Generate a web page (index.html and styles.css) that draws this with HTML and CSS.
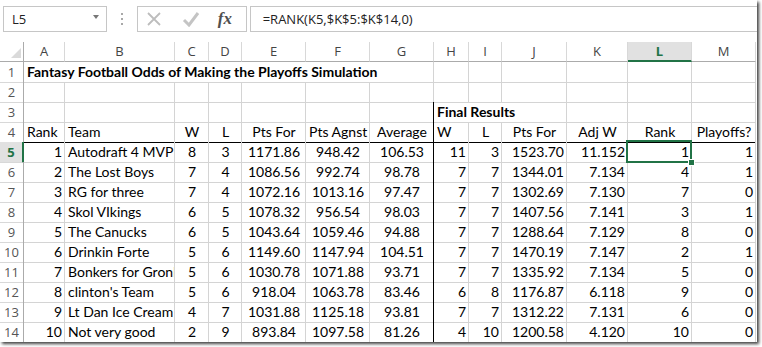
FILE: index.html
```html
<!DOCTYPE html>
<html>
<head>
<meta charset="utf-8">
<link rel="stylesheet" href="styles.css">
</head>
<body>
<div class="app">
  <div class="fbar">
    <div class="namebox"><span class="nb-text">L5</span><span class="dd"></span></div>
    <div class="dots"><i></i><i></i><i></i></div>
    <div class="btns">
      <svg class="ico" width="16" height="16" viewBox="0 0 16 16"><path d="M2 2 L14 14 M14 2 L2 14" stroke="#bdbdbd" stroke-width="1.8" fill="none"/></svg>
      <svg class="ico" width="18" height="16" viewBox="0 0 18 16"><path d="M2 9 L7 14 L16 2" stroke="#c4c4c4" stroke-width="3" fill="none"/></svg>
      <span class="fx">fx</span>
    </div>
    <div class="formula">=RANK(K5,$K$5:$K$14,0)</div>
  </div>
  <div class="sheet">
    <div class="row hdr">
      <div class="corner"><span class="tri"></span></div>
      <div class="ch">A</div><div class="ch">B</div><div class="ch">C</div><div class="ch">D</div><div class="ch">E</div><div class="ch">F</div><div class="ch">G</div><div class="ch">H</div><div class="ch">I</div><div class="ch">J</div><div class="ch">K</div><div class="ch on">L</div><div class="ch">M</div>
    </div>
    <div class="row">
      <div class="rh">1</div>
      <div class="c b span7">Fantasy Football Odds of Making the Playoffs Simulation</div>
      <div class="c"></div><div class="c"></div><div class="c"></div><div class="c"></div><div class="c"></div><div class="c"></div>
    </div>
    <div class="row">
      <div class="rh">2</div>
      <div class="c"></div><div class="c"></div><div class="c"></div><div class="c"></div><div class="c"></div><div class="c"></div><div class="c"></div><div class="c"></div><div class="c"></div><div class="c"></div><div class="c"></div><div class="c"></div><div class="c"></div>
    </div>
    <div class="row">
      <div class="rh">3</div>
      <div class="c"></div><div class="c"></div><div class="c"></div><div class="c"></div><div class="c"></div><div class="c"></div><div class="c vb"></div>
      <div class="c b span3">Final Results</div>
      <div class="c"></div><div class="c"></div><div class="c"></div>
    </div>
    <div class="row r4">
      <div class="rh">4</div>
      <div class="c">Rank</div><div class="c">Team</div><div class="c m">W</div><div class="c m">L</div><div class="c m">Pts For</div><div class="c m">Pts Agnst</div><div class="c m vb">Average</div><div class="c">W</div><div class="c m">L</div><div class="c m">Pts For</div><div class="c m">Adj W</div><div class="c m">Rank</div><div class="c m">Playoffs?</div>
    </div>
    <div class="row">
      <div class="rh on">5</div>
      <div class="c r">1</div><div class="c">Autodraft 4 MVP</div><div class="c m">8</div><div class="c m">3</div><div class="c m">1171.86</div><div class="c m">948.42</div><div class="c m vb">106.53</div><div class="c r">11</div><div class="c r">3</div><div class="c r">1523.70</div><div class="c r">11.152</div><div class="c r sel">1</div><div class="c r">1</div>
    </div>
    <div class="row">
      <div class="rh">6</div>
      <div class="c r">2</div><div class="c">The Lost Boys</div><div class="c m">7</div><div class="c m">4</div><div class="c m">1086.56</div><div class="c m">992.74</div><div class="c m vb">98.78</div><div class="c r">7</div><div class="c r">7</div><div class="c r">1344.01</div><div class="c r">7.134</div><div class="c r">4</div><div class="c r">1</div>
    </div>
    <div class="row">
      <div class="rh">7</div>
      <div class="c r">3</div><div class="c">RG for three</div><div class="c m">7</div><div class="c m">4</div><div class="c m">1072.16</div><div class="c m">1013.16</div><div class="c m vb">97.47</div><div class="c r">7</div><div class="c r">7</div><div class="c r">1302.69</div><div class="c r">7.130</div><div class="c r">7</div><div class="c r">0</div>
    </div>
    <div class="row">
      <div class="rh">8</div>
      <div class="c r">4</div><div class="c">Skol VIkings</div><div class="c m">6</div><div class="c m">5</div><div class="c m">1078.32</div><div class="c m">956.54</div><div class="c m vb">98.03</div><div class="c r">7</div><div class="c r">7</div><div class="c r">1407.56</div><div class="c r">7.141</div><div class="c r">3</div><div class="c r">1</div>
    </div>
    <div class="row">
      <div class="rh">9</div>
      <div class="c r">5</div><div class="c">The Canucks</div><div class="c m">6</div><div class="c m">5</div><div class="c m">1043.64</div><div class="c m">1059.46</div><div class="c m vb">94.88</div><div class="c r">7</div><div class="c r">7</div><div class="c r">1288.64</div><div class="c r">7.129</div><div class="c r">8</div><div class="c r">0</div>
    </div>
    <div class="row">
      <div class="rh">10</div>
      <div class="c r">6</div><div class="c">Drinkin Forte</div><div class="c m">5</div><div class="c m">6</div><div class="c m">1149.60</div><div class="c m">1147.94</div><div class="c m vb">104.51</div><div class="c r">7</div><div class="c r">7</div><div class="c r">1470.19</div><div class="c r">7.147</div><div class="c r">2</div><div class="c r">1</div>
    </div>
    <div class="row">
      <div class="rh">11</div>
      <div class="c r">7</div><div class="c clip">Bonkers for Gronk</div><div class="c m">5</div><div class="c m">6</div><div class="c m">1030.78</div><div class="c m">1071.88</div><div class="c m vb">93.71</div><div class="c r">7</div><div class="c r">7</div><div class="c r">1335.92</div><div class="c r">7.134</div><div class="c r">5</div><div class="c r">0</div>
    </div>
    <div class="row">
      <div class="rh">12</div>
      <div class="c r">8</div><div class="c">clinton's Team</div><div class="c m">5</div><div class="c m">6</div><div class="c m">918.04</div><div class="c m">1063.78</div><div class="c m vb">83.46</div><div class="c r">6</div><div class="c r">8</div><div class="c r">1176.87</div><div class="c r">6.118</div><div class="c r">9</div><div class="c r">0</div>
    </div>
    <div class="row">
      <div class="rh">13</div>
      <div class="c r">9</div><div class="c">Lt Dan Ice Cream</div><div class="c m">4</div><div class="c m">7</div><div class="c m">1031.88</div><div class="c m">1125.18</div><div class="c m vb">93.81</div><div class="c r">7</div><div class="c r">7</div><div class="c r">1312.22</div><div class="c r">7.131</div><div class="c r">6</div><div class="c r">0</div>
    </div>
    <div class="row">
      <div class="rh">14</div>
      <div class="c r">10</div><div class="c">Not very good</div><div class="c m">2</div><div class="c m">9</div><div class="c m">893.84</div><div class="c m">1097.58</div><div class="c m vb">81.26</div><div class="c r">4</div><div class="c r">10</div><div class="c r">1200.58</div><div class="c r">4.120</div><div class="c r">10</div><div class="c r">0</div>
    </div>
  </div>
</div>
</body>
</html>
```
FILE: styles.css
```css
html, body {
  margin: 0;
  padding: 0;
  background: #ffffff;
  overflow: hidden;
}
body {
  width: 762px;
  height: 347px;
}
.app {
  width: 757px;
  height: 342px;
  background: #ffffff;
  box-shadow: 2px 2px 3px rgba(0, 0, 0, 0.75);
  overflow: hidden;
}
.fbar {
  height: 42px;
  display: flex;
  align-items: flex-start;
  padding-top: 6px;
  box-sizing: border-box;
  font-family: "Open Sans", "Noto Sans", sans-serif;
  font-size: 13px;
  color: #222;
}
.namebox {
  margin-left: 3px;
  width: 104px;
  height: 26px;
  box-sizing: border-box;
  border: 1px solid #c6c6c6;
  display: flex;
  align-items: center;
  justify-content: space-between;
  padding: 0 7px 0 8px;
}
.nb-text {
  line-height: 24px;
}
.dd {
  width: 0;
  height: 0;
  border-left: 3.5px solid transparent;
  border-right: 3.5px solid transparent;
  border-top: 4px solid #777;
  margin-bottom: 4px;
}
.dots {
  width: 30px;
  height: 26px;
  display: flex;
  flex-direction: column;
  align-items: center;
  justify-content: center;
  gap: 3px;
}
.dots i {
  display: block;
  width: 2px;
  height: 2px;
  background: #a8a8a8;
}
.btns {
  width: 110px;
  height: 26px;
  box-sizing: border-box;
  border: 1px solid #c6c6c6;
  display: flex;
  align-items: center;
  padding-left: 8px;
  gap: 20px;
}
.ico {
  display: block;
  flex: none;
}
.fx {
  font-family: "Liberation Serif", "DejaVu Serif", serif;
  font-style: italic;
  font-weight: bold;
  font-size: 17px;
  color: #505050;
  margin-left: -2px;
  line-height: 24px;
}
.formula {
  margin-left: 3px;
  width: 508px;
  height: 26px;
  box-sizing: border-box;
  border: 1px solid #c6c6c6;
  border-right: none;
  padding-left: 12px;
  line-height: 24px;
}
.sheet {
  font-family: Lato, "Liberation Sans", sans-serif;
  font-size: 14px;
  color: #000;
}
.row {
  display: grid;
  grid-template-columns: 24px 41px 110px 34px 33px 64px 64px 64px 35px 33px 65px 61px 64px 64px;
  height: 20px;
}
.hdr .ch {
  font-family: "Open Sans", "Noto Sans", sans-serif;
  font-size: 13px;
  color: #444;
  text-align: center;
  line-height: 19px;
  border-right: 1px solid #d8d8d8;
  border-bottom: 1px solid #ababab;
  box-sizing: border-box;
}
.hdr .ch.on {
  background: #e1e1e1;
  color: #217346;
  font-weight: bold;
  border-bottom: 2px solid #217346;
  line-height: 18px;
}
.corner {
  border-right: 1px solid #ababab;
  border-bottom: 1px solid #ababab;
  box-sizing: border-box;
  display: flex;
  align-items: flex-end;
  justify-content: flex-end;
  padding: 0 2px 3px 0;
}
.tri {
  width: 0;
  height: 0;
  border-left: 10px solid transparent;
  border-bottom: 10px solid #dadada;
}
.rh {
  font-family: "Open Sans", "Noto Sans", sans-serif;
  font-size: 13px;
  color: #555;
  text-align: center;
  line-height: 20px;
  border-right: 1px solid #ababab;
  border-bottom: 1px solid #d8d8d8;
  box-sizing: border-box;
}
.rh.on {
  background: #e1e1e1;
  color: #217346;
  font-weight: bold;
  border-right: 2px solid #217346;
}
.c {
  border-right: 1px solid #d4d4d4;
  border-bottom: 1px solid #d4d4d4;
  box-sizing: border-box;
  padding: 0 2px 0 3px;
  white-space: nowrap;
  overflow: hidden;
  line-height: 20px;
}
.c.r { text-align: right; }
.c.m { text-align: center; }
.c.b { font-weight: bold; }
.c.clip { text-overflow: clip; }
.span7 { grid-column: span 7; overflow: visible; }
.span3 { grid-column: span 3; overflow: visible; }
.r4 .c { border-bottom-color: #000; }
.vb { border-right-color: #000 !important; }
.sel {
  position: relative;
  overflow: visible;
}
.sel::after {
  content: "";
  position: absolute;
  left: -2px;
  top: -2px;
  right: -1px;
  bottom: -1px;
  border: 2px solid #217346;
  z-index: 2;
}
.sel::before {
  content: "";
  position: absolute;
  right: -4px;
  bottom: -4px;
  width: 5px;
  height: 5px;
  background: #217346;
  border: 1px solid #fff;
  z-index: 3;
}
```
